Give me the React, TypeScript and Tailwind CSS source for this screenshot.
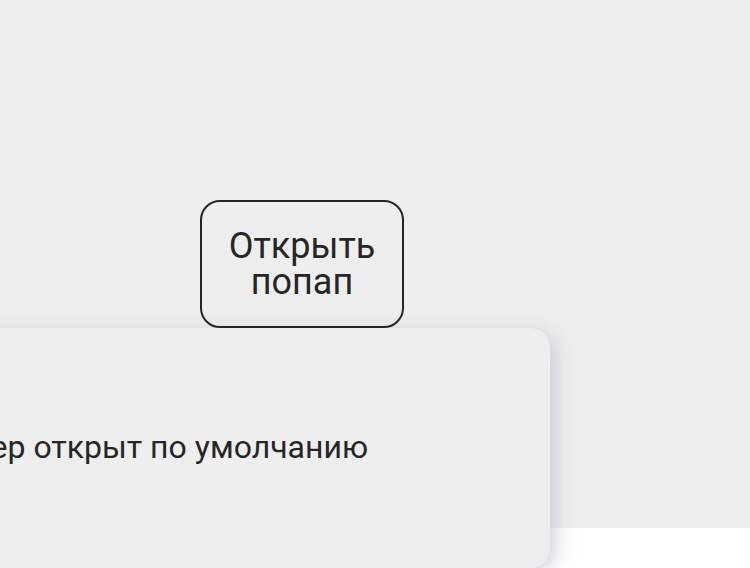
export default function App() {
  return (
    <main className="overflow-hidden bg-white font-[Roboto,sans-serif] text-[#262626]">
      <section className="flex h-[528px] flex-col items-start bg-[#eeeeee] pt-[200px]">
        <button
          type="button"
          className="z-10 ml-[200px] w-[204px] rounded-[20px] border-2 border-[#262626] px-6 py-[26px] text-center text-4xl leading-9"
        >
          Открыть попап
        </button>
        <div
          role="dialog"
          className="-ml-10 mr-[200px] flex h-60 shrink-0 items-center justify-end self-stretch rounded-[20px] bg-[#eeeeee] pr-[182px] pb-0.5 shadow-[5px_5px_20px_rgba(166,178,190,0.55)]"
        >
          <p className="whitespace-nowrap text-[32px] leading-9">ер открыт по умолчанию</p>
        </div>
      </section>
      <div className="h-10" />
    </main>
  )
}
